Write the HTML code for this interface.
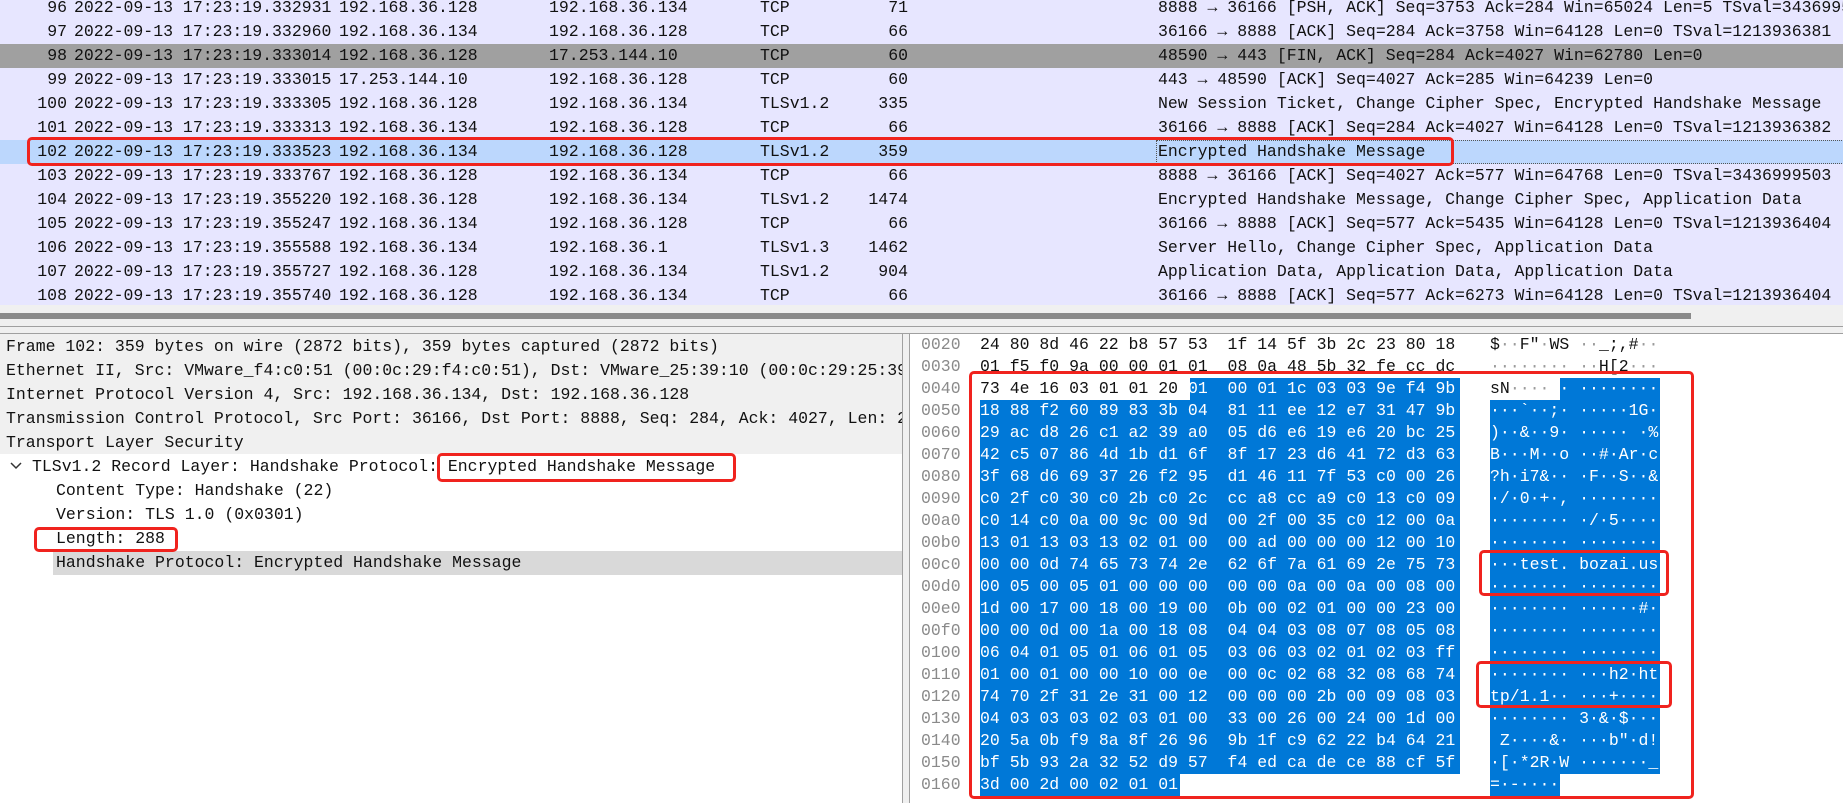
<!DOCTYPE html>
<html><head><meta charset="utf-8"><style>
*{margin:0;padding:0;box-sizing:border-box}
body{width:1843px;height:803px;overflow:hidden;position:relative;background:#fff;font-family:"Liberation Mono",monospace;font-size:16.5px;color:#111}
.a{position:absolute;white-space:pre}
.row{position:absolute;left:0;width:1843px;height:24px;background:#e7e6ff;line-height:24px;overflow:hidden}
.row span{position:absolute;top:0;white-space:pre}
.no{right:1776px;text-align:right}
.box{position:absolute;border:3px solid #f0231e;border-radius:5px}
.t{position:absolute;line-height:24px;white-space:pre}
.off{color:#8a8a8a}
.h{position:absolute;line-height:22px;white-space:pre;height:22px}
.w{color:#fff}
.d{color:#9a9a9a}
.sel{position:absolute;background:#0078d7}
</style></head><body>

<!-- packet list -->
<div class="row" style="top:-4px"><span class="no">96</span><span style="left:74px">2022-09-13 17:23:19.332931</span><span style="left:339px">192.168.36.128</span><span style="left:549px">192.168.36.134</span><span style="left:760px">TCP</span><span style="left:858px;width:50px;text-align:right">71</span><span style="left:1158px">8888 → 36166 [PSH, ACK] Seq=3753 Ack=284 Win=65024 Len=5 TSval=3436995</span></div>
<div class="row" style="top:20px"><span class="no">97</span><span style="left:74px">2022-09-13 17:23:19.332960</span><span style="left:339px">192.168.36.134</span><span style="left:549px">192.168.36.128</span><span style="left:760px">TCP</span><span style="left:858px;width:50px;text-align:right">66</span><span style="left:1158px">36166 → 8888 [ACK] Seq=284 Ack=3758 Win=64128 Len=0 TSval=1213936381</span></div>
<div class="row" style="top:44px;background:#a0a0a0"><span class="no">98</span><span style="left:74px">2022-09-13 17:23:19.333014</span><span style="left:339px">192.168.36.128</span><span style="left:549px">17.253.144.10</span><span style="left:760px">TCP</span><span style="left:858px;width:50px;text-align:right">60</span><span style="left:1158px">48590 → 443 [FIN, ACK] Seq=284 Ack=4027 Win=62780 Len=0</span></div>
<div class="row" style="top:68px"><span class="no">99</span><span style="left:74px">2022-09-13 17:23:19.333015</span><span style="left:339px">17.253.144.10</span><span style="left:549px">192.168.36.128</span><span style="left:760px">TCP</span><span style="left:858px;width:50px;text-align:right">60</span><span style="left:1158px">443 → 48590 [ACK] Seq=4027 Ack=285 Win=64239 Len=0</span></div>
<div class="row" style="top:92px"><span class="no">100</span><span style="left:74px">2022-09-13 17:23:19.333305</span><span style="left:339px">192.168.36.128</span><span style="left:549px">192.168.36.134</span><span style="left:760px">TLSv1.2</span><span style="left:858px;width:50px;text-align:right">335</span><span style="left:1158px">New Session Ticket, Change Cipher Spec, Encrypted Handshake Message</span></div>
<div class="row" style="top:116px"><span class="no">101</span><span style="left:74px">2022-09-13 17:23:19.333313</span><span style="left:339px">192.168.36.134</span><span style="left:549px">192.168.36.128</span><span style="left:760px">TCP</span><span style="left:858px;width:50px;text-align:right">66</span><span style="left:1158px">36166 → 8888 [ACK] Seq=284 Ack=4027 Win=64128 Len=0 TSval=1213936382</span></div>
<div class="row" style="top:140px;background:#bcd7fd"><span class="no">102</span><span style="left:74px">2022-09-13 17:23:19.333523</span><span style="left:339px">192.168.36.134</span><span style="left:549px">192.168.36.128</span><span style="left:760px">TLSv1.2</span><span style="left:858px;width:50px;text-align:right">359</span><span style="left:1156px;width:690px;height:24px;border:1px dotted #555"></span><span style="left:1158px">Encrypted Handshake Message</span></div>
<div class="row" style="top:164px"><span class="no">103</span><span style="left:74px">2022-09-13 17:23:19.333767</span><span style="left:339px">192.168.36.128</span><span style="left:549px">192.168.36.134</span><span style="left:760px">TCP</span><span style="left:858px;width:50px;text-align:right">66</span><span style="left:1158px">8888 → 36166 [ACK] Seq=4027 Ack=577 Win=64768 Len=0 TSval=3436999503</span></div>
<div class="row" style="top:188px"><span class="no">104</span><span style="left:74px">2022-09-13 17:23:19.355220</span><span style="left:339px">192.168.36.128</span><span style="left:549px">192.168.36.134</span><span style="left:760px">TLSv1.2</span><span style="left:858px;width:50px;text-align:right">1474</span><span style="left:1158px">Encrypted Handshake Message, Change Cipher Spec, Application Data</span></div>
<div class="row" style="top:212px"><span class="no">105</span><span style="left:74px">2022-09-13 17:23:19.355247</span><span style="left:339px">192.168.36.134</span><span style="left:549px">192.168.36.128</span><span style="left:760px">TCP</span><span style="left:858px;width:50px;text-align:right">66</span><span style="left:1158px">36166 → 8888 [ACK] Seq=577 Ack=5435 Win=64128 Len=0 TSval=1213936404</span></div>
<div class="row" style="top:236px"><span class="no">106</span><span style="left:74px">2022-09-13 17:23:19.355588</span><span style="left:339px">192.168.36.134</span><span style="left:549px">192.168.36.1</span><span style="left:760px">TLSv1.3</span><span style="left:858px;width:50px;text-align:right">1462</span><span style="left:1158px">Server Hello, Change Cipher Spec, Application Data</span></div>
<div class="row" style="top:260px"><span class="no">107</span><span style="left:74px">2022-09-13 17:23:19.355727</span><span style="left:339px">192.168.36.128</span><span style="left:549px">192.168.36.134</span><span style="left:760px">TLSv1.2</span><span style="left:858px;width:50px;text-align:right">904</span><span style="left:1158px">Application Data, Application Data, Application Data</span></div>
<div class="row" style="top:284px;height:21px"><span class="no">108</span><span style="left:74px">2022-09-13 17:23:19.355740</span><span style="left:339px">192.168.36.128</span><span style="left:549px">192.168.36.134</span><span style="left:760px">TCP</span><span style="left:858px;width:50px;text-align:right">66</span><span style="left:1158px">36166 → 8888 [ACK] Seq=577 Ack=6273 Win=64128 Len=0 TSval=1213936404</span></div>

<!-- scrollbar / splitter -->
<div class="a" style="left:0;top:305px;width:1843px;height:28px;background:#f0f0f0"></div>
<div class="a" style="left:0;top:313px;width:1691px;height:6px;background:#8a8a8a"></div>
<div class="a" style="left:0;top:326px;width:1843px;height:1px;background:#a0a0a0"></div>
<div class="a" style="left:0;top:333px;width:1843px;height:1px;background:#a0a0a0"></div>

<!-- tree pane -->
<div class="a" style="left:0;top:334px;width:902px;height:120px;background:#f0f0f0"></div>
<div class="a" style="left:902px;top:334px;width:8px;height:469px;background:#f0f0f0;border-left:1px solid #a0a0a0;border-right:1px solid #a0a0a0"></div>
<div class="a" style="left:53px;top:551px;width:849px;height:24px;background:#d9d9d9"></div>
<div class="a" style="left:0;top:334px;width:902px;height:469px;overflow:hidden">
<div class="t" style="left:6px;top:1px">Frame 102: 359 bytes on wire (2872 bits), 359 bytes captured (2872 bits)</div>
<div class="t" style="left:6px;top:25px">Ethernet II, Src: VMware_f4:c0:51 (00:0c:29:f4:c0:51), Dst: VMware_25:39:10 (00:0c:29:25:39:10)</div>
<div class="t" style="left:6px;top:49px">Internet Protocol Version 4, Src: 192.168.36.134, Dst: 192.168.36.128</div>
<div class="t" style="left:6px;top:73px">Transmission Control Protocol, Src Port: 36166, Dst Port: 8888, Seq: 284, Ack: 4027, Len: 293</div>
<div class="t" style="left:6px;top:97px">Transport Layer Security</div>
<svg class="a" style="left:10px;top:127px" width="12" height="10"><polyline points="1,2 6,7 11,2" fill="none" stroke="#333" stroke-width="1.5"/></svg>
<div class="t" style="left:32px;top:121px">TLSv1.2 Record Layer: Handshake Protocol: Encrypted Handshake Message</div>
<div class="t" style="left:56px;top:145px">Content Type: Handshake (22)</div>
<div class="t" style="left:56px;top:169px">Version: TLS 1.0 (0x0301)</div>
<div class="t" style="left:56px;top:193px">Length: 288</div>
<div class="t" style="left:56px;top:217px">Handshake Protocol: Encrypted Handshake Message</div>
</div>

<!-- hex pane -->
<div class="sel" style="left:1190px;top:378px;width:270px;height:22px"></div>
<div class="sel" style="left:980px;top:400px;width:480px;height:374px"></div>
<div class="sel" style="left:980px;top:774px;width:200px;height:22px"></div>
<div class="sel" style="left:1560px;top:378px;width:100px;height:22px"></div>
<div class="sel" style="left:1490px;top:400px;width:170px;height:374px"></div>
<div class="sel" style="left:1490px;top:774px;width:70px;height:22px"></div>

<div class="a" style="left:921px;top:334px;line-height:22px;color:#8a8a8a">0020
0030
0040
0050
0060
0070
0080
0090
00a0
00b0
00c0
00d0
00e0
00f0
0100
0110
0120
0130
0140
0150
0160</div>

<div class="a" style="left:980px;top:334px;line-height:22px">24 80 8d 46 22 b8 57 53  1f 14 5f 3b 2c 23 80 18
01 f5 f0 9a 00 00 01 01  08 0a 48 5b 32 fe cc dc
73 4e 16 03 01 01 20 <span class="w">01  00 01 1c 03 03 9e f4 9b</span><span class="w">
18 88 f2 60 89 83 3b 04  81 11 ee 12 e7 31 47 9b
29 ac d8 26 c1 a2 39 a0  05 d6 e6 19 e6 20 bc 25
42 c5 07 86 4d 1b d1 6f  8f 17 23 d6 41 72 d3 63
3f 68 d6 69 37 26 f2 95  d1 46 11 7f 53 c0 00 26
c0 2f c0 30 c0 2b c0 2c  cc a8 cc a9 c0 13 c0 09
c0 14 c0 0a 00 9c 00 9d  00 2f 00 35 c0 12 00 0a
13 01 13 03 13 02 01 00  00 ad 00 00 00 12 00 10
00 00 0d 74 65 73 74 2e  62 6f 7a 61 69 2e 75 73
00 05 00 05 01 00 00 00  00 00 0a 00 0a 00 08 00
1d 00 17 00 18 00 19 00  0b 00 02 01 00 00 23 00
00 00 0d 00 1a 00 18 08  04 04 03 08 07 08 05 08
06 04 01 05 01 06 01 05  03 06 03 02 01 02 03 ff
01 00 01 00 00 10 00 0e  00 0c 02 68 32 08 68 74
74 70 2f 31 2e 31 00 12  00 00 00 2b 00 09 08 03
04 03 03 03 02 03 01 00  33 00 26 00 24 00 1d 00
20 5a 0b f9 8a 8f 26 96  9b 1f c9 62 22 b4 64 21
bf 5b 93 2a 32 52 d9 57  f4 ed ca de ce 88 cf 5f
3d 00 2d 00 02 01 01</span></div>

<div class="a" style="left:1490px;top:334px;line-height:22px">$<span class="d">··</span>F"<span class="d">·</span>WS <span class="d">··</span>_;,#<span class="d">··</span>
<span class="d">········ ··</span>H[2<span class="d">···</span>
sN<span class="d">····</span> <span class="w">· ········
···`··;· ·····1G·
)··&amp;··9· ····· ·%
B···M··o ··#·Ar·c
?h·i7&amp;·· ·F··S··&amp;
·/·0·+·, ········
········ ·/·5····
········ ········
···test. bozai.us
········ ········
········ ······#·
········ ········
········ ········
········ ···h2·ht
tp/1.1·· ···+····
········ 3·&amp;·$···
 Z····&amp;· ···b"·d!
·[·*2R·W ·······_
=·-····</span></div>

<!-- red annotation boxes -->
<div class="box" style="left:27px;top:137px;width:1427px;height:29px"></div>
<div class="box" style="left:437px;top:453px;width:299px;height:29px"></div>
<div class="box" style="left:34px;top:527px;width:144px;height:25px"></div>
<div class="box" style="left:969px;top:371px;width:725px;height:428px"></div>
<div class="box" style="left:1479px;top:550px;width:190px;height:46px"></div>
<div class="box" style="left:1476px;top:661px;width:196px;height:47px"></div>
</body></html>
